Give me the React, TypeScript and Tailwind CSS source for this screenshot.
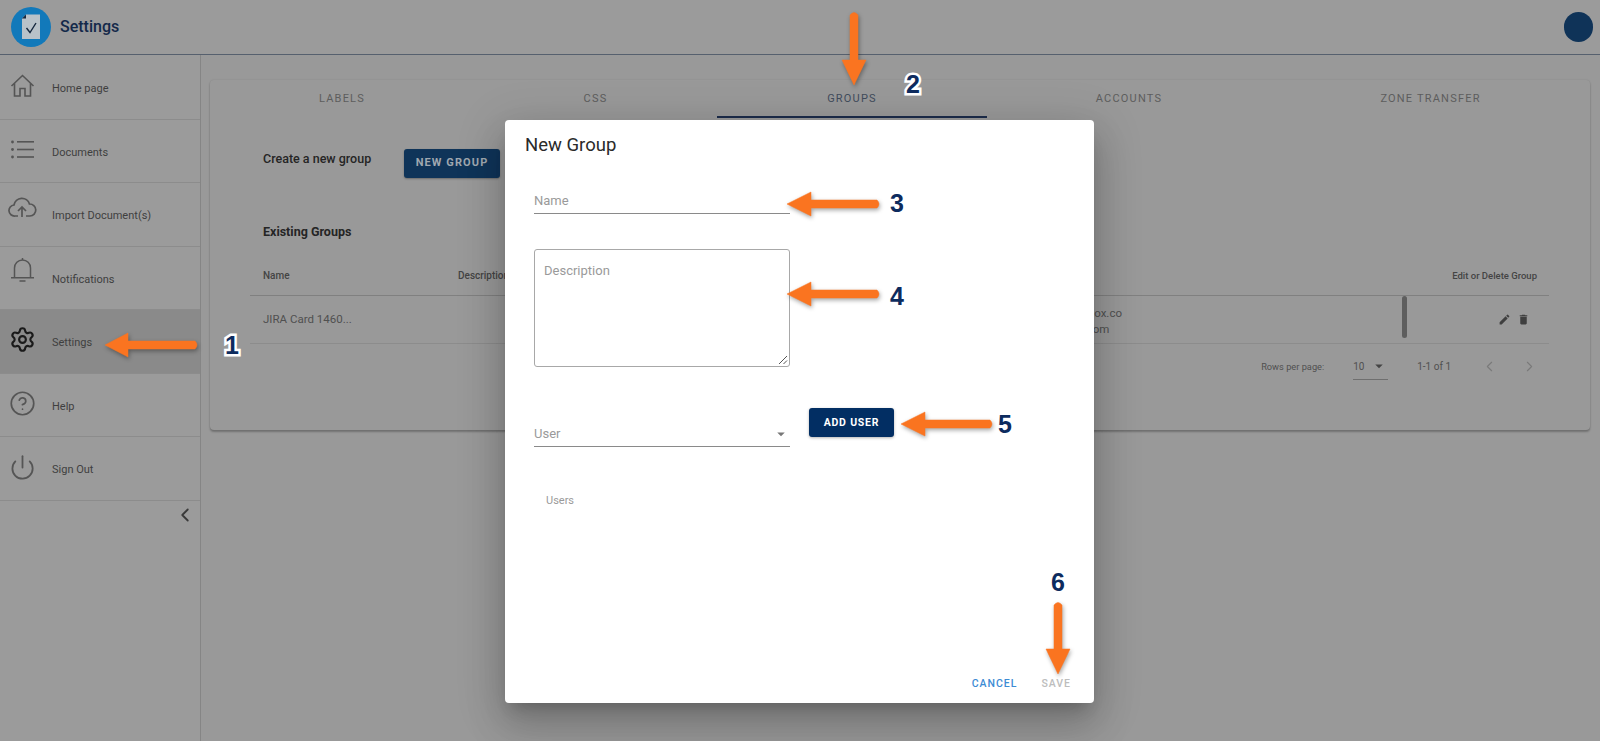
import React from "react";
import { Settings, CircleHelp, Power, ChevronLeft, ChevronRight } from "lucide-react";
import { MdEdit, MdDelete, MdArrowDropDown } from "react-icons/md";

function HomeIcon() {
  return (
    <svg width="27" height="27" viewBox="0 0 27 27" fill="none" stroke="currentColor" strokeWidth="1.6" className="-translate-y-[2px]">
      <path d="M2.5 14 L13.5 3.5 L24.5 14 M5.5 11.5 V24 H11 V16.5 H16 V24 H21.5 V11.5" />
    </svg>
  );
}
function ListIcon() {
  return (
    <svg width="27" height="27" viewBox="0 0 27 27" fill="currentColor" stroke="none" className="-translate-y-[1px]">
      <circle cx="3.5" cy="6" r="1.4" />
      <circle cx="3.5" cy="13.5" r="1.4" />
      <circle cx="3.5" cy="21" r="1.4" />
      <rect x="8" y="5" width="17" height="1.6" />
      <rect x="8" y="12.7" width="17" height="1.6" />
      <rect x="8" y="20.2" width="17" height="1.6" />
    </svg>
  );
}
function CloudIcon() {
  return (
    <svg width="29" height="29" viewBox="0 0 29 29" fill="none" stroke="currentColor" strokeWidth="1.7" className="-ml-[1px] -translate-y-[6px]">
      <path d="M10 22 H7 a5.5 5.5 0 0 1 -1 -11 a8 8 0 0 1 15.5 -1 a6 6 0 0 1 0.5 12 H18" />
      <path d="M14 23 V13 M10 17 L14 13 L18 17" />
    </svg>
  );
}
function BellIcon() {
  return (
    <svg width="27" height="27" viewBox="0 0 27 27" fill="none" stroke="currentColor" strokeWidth="1.5" className="-translate-y-[7px]">
      <path d="M5.5 20.5 V11 a8 8 0 0 1 16 0 V20.5 M2 20.8 H25 M10.5 24 H16.5 M13.5 1 V3" />
    </svg>
  );
}

const nav = [
  { label: "Home page", Icon: HomeIcon },
  { label: "Documents", Icon: ListIcon },
  { label: "Import Document(s)", Icon: CloudIcon },
  { label: "Notifications", Icon: BellIcon },
  { label: "Settings", Icon: () => <Settings size={27} strokeWidth={1.9} className="-translate-y-[2px]" />, active: true },
  { label: "Help", Icon: () => <CircleHelp size={27} strokeWidth={1.5} className="-translate-y-[1px]" /> },
  { label: "Sign Out", Icon: () => <Power size={27} strokeWidth={1.6} className="-translate-y-[1px]" /> },
];

const tabs = [
  { label: "LABELS", cls: "w-[264px] border-transparent text-[#5d5d5d]" },
  { label: "CSS", cls: "w-[243px] border-transparent text-[#5d5d5d]" },
  { label: "GROUPS", cls: "w-[270px] border-[#1c2c4a] text-[#414c5c]" },
  { label: "ACCOUNTS", cls: "w-[284px] border-transparent text-[#5d5d5d]" },
  { label: "ZONE TRANSFER", cls: "w-[319px] border-transparent text-[#5d5d5d]" },
];

function Logo() {
  return (
    <svg width="40" height="40" viewBox="0 0 40 40" className="shrink-0">
      <circle cx="20" cy="20" r="20" fill="#1279ba" />
      <path d="M15 7.5 L29 7.5 L29 32 L11 32 L11 11.5 Z" fill="#b9c2c9" />
      <path d="M11 11.5 L15 7.5 L15 11.5 Z" fill="#16283f" />
      <path d="M15.5 21 L19 25.5 L25 16" fill="none" stroke="#16283f" strokeWidth="1.4" />
    </svg>
  );
}

function Digit({ children, cls, outlined }: { children: React.ReactNode; cls: string; outlined?: boolean }) {
  return (
    <span
      className={
        "absolute -translate-x-1/2 -translate-y-1/2 font-['Liberation_Sans',sans-serif] font-bold text-[25px] leading-none text-[#0d2b5e] " +
        (outlined ? "[paint-order:stroke_fill] [-webkit-text-stroke:5px_white] " : "") +
        cls
      }
    >
      {children}
    </span>
  );
}

export default function App() {
  return (
    <div className="relative h-[741px] w-[1600px] overflow-hidden bg-[#999999] font-['Roboto',sans-serif]">
      <header className="flex h-[55px] items-center justify-between border-b border-[#56606e] bg-[#9b9b9b] pl-[11px] pr-[7px]">
        <div className="flex items-center gap-[9px]">
          <Logo />
          <span className="text-[16px] font-medium text-[#14294a]">Settings</span>
        </div>
        <div className="h-[30px] w-[29px] rounded-full bg-[#0f3358]" />
      </header>

      <div className="flex h-[686px]">
        <aside className="w-[201px] shrink-0 border-r border-[#858585] bg-[#9b9b9b] pt-[1px]">
          {nav.map(({ label, Icon, active }) => (
            <div
              key={label}
              className={
                "flex h-[63.5px] items-center border-b border-[#8c8c8c] pl-[9px] " +
                (active ? "bg-[#8a8a8a]" : "")
              }
            >
              <span className={"flex w-[43px] items-center " + (active ? "text-[#1a1a1a]" : "text-[#555555]")}>
                <Icon />
              </span>
              <span className="mt-[4px] text-[11px] text-[#3f3f3f]">{label}</span>
            </div>
          ))}
          <div className="flex justify-end pr-[4px] pt-[3px] text-[#3a3a3a]">
            <ChevronLeft size={22} strokeWidth={2} />
          </div>
        </aside>

        <main className="flex-1 pl-[9px] pt-[25px]">
          <section className="h-[350px] w-[1380px] rounded-[4px] bg-[#999999] shadow-[0_2px_2px_rgba(0,0,0,0.25),0_0_2px_rgba(0,0,0,0.12)]">
            <div className="flex h-[38px]">
              {tabs.map((t) => (
                <div
                  key={t.label}
                  className={"flex items-center justify-center border-b-2 pt-[3px] text-[11px] tracking-[1.2px] " + t.cls}
                >
                  {t.label}
                </div>
              ))}
            </div>

            <div className="flex pl-[53px] pt-[31px]">
              <span className="mt-[2px] w-[141px] text-[12.5px] font-medium leading-[16px] text-[#252525]">Create a new group</span>
              <span className="flex h-[29px] w-[96px] items-center justify-center rounded-[3px] bg-[#0f3459] text-[11px] font-bold tracking-[1.1px] text-[#a0a8b0] shadow-[0_1px_2px_rgba(0,0,0,0.3)]">
                NEW GROUP
              </span>
            </div>

            <h2 className="pl-[53px] pt-[46px] text-[12.5px] font-bold leading-[16px] text-[#252525]">Existing Groups</h2>

            <div className="relative ml-[40px] mr-[41px] mt-[29px]">
              <div className="flex h-[27px] items-start border-b border-[#808080] pl-[13px] text-[10px] font-medium leading-[13px] text-[#444444]">
                <span className="w-[195px]">Name</span>
                <span className="w-[200px]">Description</span>
                <span className="ml-auto pr-[12px] text-[9.5px]">Edit or Delete Group</span>
              </div>
              <div className="flex h-[48px] items-center border-b border-[#8c8c8c] pl-[13px] text-[11.5px] text-[#505050]">
                <span className="w-[195px]">JIRA Card 1460...</span>
                <span className="w-[582px]" />
                <span className="flex translate-y-[1px] flex-col leading-[16px]">
                  <span>qa@zonedox.co</span>
                  <span>al@zdox.com</span>
                </span>
                <span className="ml-auto flex items-center gap-[6px] pr-[19px] text-[#3f3f3f]">
                  <MdEdit size={13} />
                  <MdDelete size={13} />
                </span>
              </div>
              <div className="absolute left-[1152px] top-[27px] h-[42px] w-[5px] rounded-full bg-[#5e5e5e]" />
              <div className="flex h-[45px] items-center justify-end pr-[11px] text-[9.25px] text-[#505050]">
                <span>Rows per page:</span>
                <span className="relative ml-[29px] flex h-[27px] w-[35px] items-center justify-between border-b border-[#6f6f6f] text-[10px] text-[#505050]">
                  <span>10</span>
                  <MdArrowDropDown size={18} className="text-[#444444]" />
                </span>
                <span className="ml-[29px] text-[10px]">1-1 of 1</span>
                <ChevronLeft size={17} strokeWidth={1.5} className="ml-[30px] text-[#7a7a7a]" />
                <ChevronRight size={17} strokeWidth={1.5} className="ml-[23px] text-[#7a7a7a]" />
              </div>
            </div>
          </section>
        </main>
      </div>

      {/* Dialog */}
      <div className="absolute left-[505px] top-[120px] flex h-[583px] w-[589px] flex-col rounded-[4px] bg-white shadow-[0_11px_15px_-7px_rgba(0,0,0,0.2),0_24px_38px_3px_rgba(0,0,0,0.14),0_9px_46px_8px_rgba(0,0,0,0.12)]">
        <h1 className="pl-[20px] pt-[12px] text-[18.5px] font-normal leading-[26px] text-[#2a2a2a]">New Group</h1>
        <div className="ml-[29px] mt-[20px] flex h-[36px] w-[256px] items-end border-b border-[#8a8a8a] pb-[2px] text-[13px] leading-[20px] text-[#9a9a9a]">
          Name
        </div>
        <div className="relative ml-[29px] mt-[35px] h-[118px] w-[256px] rounded-[3px] border border-[#a8a8a8] pl-[9px] pt-[11px] text-[13px] leading-[20px] text-[#9a9a9a]">
          Description
          <svg width="10" height="10" viewBox="0 0 10 10" className="absolute bottom-[1px] right-[1px]">
            <path d="M1 9 L9 1 M5.5 9 L9 5.5" stroke="#555555" strokeWidth="1" />
          </svg>
        </div>
        <div className="ml-[29px] mt-[41px] flex items-start">
          <div className="mt-[4px] flex h-[35px] w-[256px] items-end justify-between border-b border-[#8a8a8a] pb-[2px] text-[13px] leading-[20px] text-[#9a9a9a]">
            <span>User</span>
            <MdArrowDropDown size={18} className="mb-[1px] text-[#777777]" />
          </div>
          <span className="ml-[19px] flex h-[29px] w-[85px] items-center justify-center rounded-[3px] bg-[#022e63] text-[10.5px] font-bold tracking-[0.8px] text-white shadow-[0_1px_3px_rgba(0,0,0,0.3)]">
            ADD USER
          </span>
        </div>
        <div className="ml-[41px] mt-[47px] text-[11px] leading-[14px] text-[#9a9a9a]">Users</div>
        <div className="mt-auto flex justify-end gap-[24px] pb-[12px] pr-[23px] text-[10.5px] font-medium leading-[14px] tracking-[1px]">
          <span className="text-[#3d8bd4]">CANCEL</span>
          <span className="text-[#bdbdbd]">SAVE</span>
        </div>
      </div>

      {/* Callout arrows */}
      <svg width="1600" height="741" viewBox="0 0 1600 741" className="pointer-events-none absolute left-0 top-0 drop-shadow-[1px_2px_2px_rgba(0,0,0,0.35)]">
        <g fill="#fa7420" stroke="#fa7420" strokeLinejoin="round">
          <path d="M105 345 L128 333 L128 341 L195 341 Q199 345 195 349 L128 349 L128 357 Z" strokeWidth="0.5" />
          <path d="M854 85 L842 60 L850 60 L850 15 Q854 10 858 15 L858 60 L866 60 Z" strokeWidth="0.5" />
          <path d="M787 204 L811 192 L811 200 L877 200 Q881 204 877 208 L811 208 L811 216 Z" strokeWidth="0.5" />
          <path d="M787 294 L811 282 L811 290 L877 290 Q881 294 877 298 L811 298 L811 306 Z" strokeWidth="0.5" />
          <path d="M901 424 L925 412 L925 420 L990 420 Q994 424 990 428 L925 428 L925 436 Z" strokeWidth="0.5" />
          <path d="M1058 674 L1046 649 L1054 649 L1054 605 Q1058 600 1062 605 L1062 649 L1070 649 Z" strokeWidth="0.5" />
        </g>
      </svg>
      <Digit cls="left-[232px] top-[345px]" outlined>1</Digit>
      <Digit cls="left-[913px] top-[84px]" outlined>2</Digit>
      <Digit cls="left-[897px] top-[203px]">3</Digit>
      <Digit cls="left-[897px] top-[296px]">4</Digit>
      <Digit cls="left-[1005px] top-[424px]">5</Digit>
      <Digit cls="left-[1058px] top-[582px]">6</Digit>
    </div>
  );
}
